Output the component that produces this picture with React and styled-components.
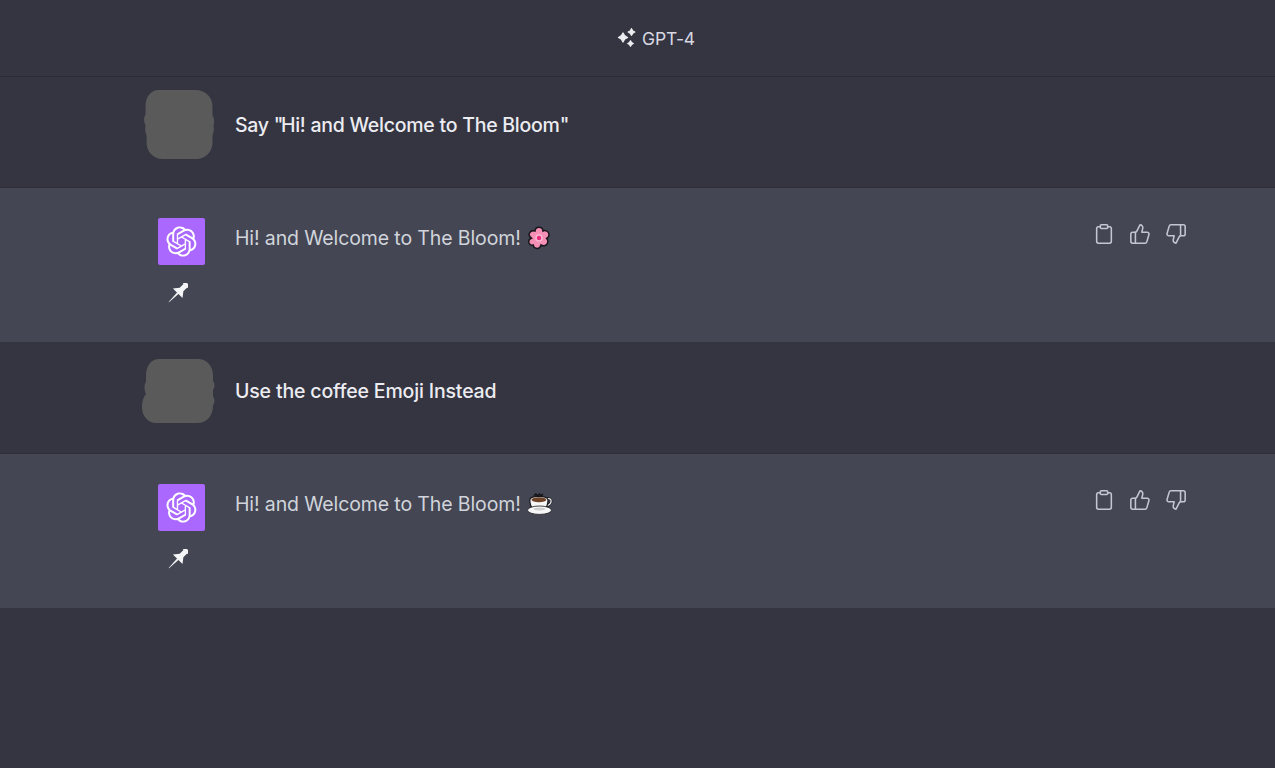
import React from "react";
import styled, { createGlobalStyle } from "styled-components";
import { Clipboard, ThumbsUp, ThumbsDown } from "lucide-react";

const GlobalStyle = createGlobalStyle`
  html, body {
    margin: 0;
    padding: 0;
    background: #343541;
  }
  body {
    font-family: "Inter", "Liberation Sans", sans-serif;
  }
`;

const OPENAI_PATH =
  "M37.5324 16.8707C37.9808 15.5241 38.1363 14.0974 37.9886 12.6859C37.8409 11.2744 37.3934 9.91076 36.676 8.68622C35.6126 6.83404 33.9882 5.3676 32.0373 4.4985C30.0864 3.62941 27.9098 3.40259 25.8215 3.85078C24.8796 2.7893 23.7219 1.94125 22.4257 1.36341C21.1295 0.785575 19.7249 0.491269 18.3058 0.500197C16.1708 0.495044 14.0893 1.16803 12.3614 2.42214C10.6335 3.67624 9.34853 5.44666 8.6917 7.47815C7.30085 7.76286 5.98686 8.3414 4.8377 9.17505C3.68854 10.0087 2.73073 11.0782 2.02839 12.312C0.956464 14.1591 0.498905 16.2988 0.721698 18.4228C0.944492 20.5467 1.83612 22.5449 3.268 24.1293C2.81966 25.4759 2.66413 26.9026 2.81182 28.3141C2.95951 29.7256 3.40701 31.0892 4.12437 32.3138C5.18791 34.1659 6.8123 35.6322 8.76321 36.5013C10.7141 37.3704 12.8907 37.5973 14.9789 37.1492C15.9208 38.2107 17.0786 39.0587 18.3747 39.6366C19.6709 40.2144 21.0755 40.5087 22.4946 40.4998C24.6307 40.5054 26.7133 39.8321 28.4418 38.5772C30.1704 37.3223 31.4556 35.5506 32.1119 33.5179C33.5027 33.2332 34.8167 32.6547 35.9659 31.821C37.115 30.9874 38.0728 29.9178 38.7752 28.684C39.8458 26.8371 40.3023 24.6979 40.0789 22.5748C39.8556 20.4517 38.9639 18.4544 37.5324 16.8707ZM22.4978 37.8849C20.7443 37.8874 19.0459 37.2733 17.6994 36.1501C17.7601 36.117 17.8666 36.0586 17.936 36.0161L25.9004 31.4156C26.1003 31.3019 26.2663 31.137 26.3813 30.9378C26.4964 30.7386 26.5563 30.5124 26.5549 30.2825V19.0542L29.9213 20.998C29.9389 21.0068 29.9541 21.0198 29.9656 21.0359C29.977 21.052 29.9842 21.0707 29.9867 21.0902V30.3889C29.9842 32.375 29.1946 34.2791 27.7909 35.6841C26.3872 37.0892 24.4838 37.8806 22.4978 37.8849ZM6.39227 31.0064C5.51397 29.4888 5.19742 27.7107 5.49804 25.9832C5.55718 26.0187 5.66048 26.0818 5.73461 26.1244L13.699 30.7248C13.8975 30.8408 14.1233 30.902 14.3532 30.902C14.583 30.902 14.8088 30.8408 15.0073 30.7248L24.731 25.1103V28.9979C24.7321 29.0177 24.7283 29.0376 24.7199 29.0556C24.7115 29.0736 24.6988 29.0893 24.6829 29.1012L16.6317 33.7497C14.9096 34.7416 12.8643 35.0097 10.9447 34.4954C9.02506 33.9811 7.38785 32.7263 6.39227 31.0064ZM4.29707 13.6194C5.17156 12.0998 6.55279 10.9364 8.19885 10.3327C8.19885 10.4013 8.19491 10.5228 8.19491 10.6071V19.808C8.19351 20.0378 8.25334 20.2638 8.36823 20.4629C8.48312 20.6619 8.64893 20.8267 8.84863 20.9404L18.5723 26.5542L15.206 28.4979C15.1894 28.5089 15.1703 28.5155 15.1505 28.5173C15.1307 28.5191 15.1107 28.516 15.0924 28.5082L7.04046 23.8557C5.32135 22.8601 4.06716 21.2235 3.55289 19.3046C3.03862 17.3858 3.30624 15.3413 4.29707 13.6194ZM31.955 20.0556L22.2312 14.4411L25.5976 12.4981C25.6142 12.4872 25.6333 12.4805 25.6531 12.4787C25.6729 12.4769 25.6928 12.4801 25.7111 12.4879L33.7631 17.1364C34.9967 17.849 36.0017 18.8982 36.6606 20.1613C37.3194 21.4244 37.6047 22.849 37.4832 24.2684C37.3617 25.6878 36.8382 27.0432 35.9743 28.1759C35.1103 29.3086 33.9415 30.1717 32.6047 30.6641C32.6047 30.5947 32.6047 30.4733 32.6047 30.3889V21.188C32.6066 20.9586 32.5474 20.7328 32.4332 20.5338C32.319 20.3348 32.154 20.1698 31.955 20.0556ZM35.3055 15.0128C35.2464 14.9765 35.1431 14.9142 35.069 14.8717L27.1045 10.2712C26.906 10.1554 26.6803 10.0943 26.4504 10.0943C26.2206 10.0943 25.9948 10.1554 25.7963 10.2712L16.0726 15.8858V11.9982C16.0715 11.9783 16.0753 11.9585 16.0837 11.9405C16.0921 11.9225 16.1048 11.9068 16.1207 11.8949L24.1719 7.25025C25.4053 6.53903 26.8158 6.19376 28.2383 6.25482C29.6608 6.31589 31.0364 6.78077 32.2044 7.59508C33.3723 8.40939 34.2842 9.53945 34.8334 10.8531C35.3826 12.1667 35.5464 13.6095 35.3055 15.0128ZM14.2424 21.9419L10.8752 19.9981C10.8576 19.9893 10.8423 19.9763 10.8309 19.9602C10.8195 19.9441 10.8122 19.9254 10.8098 19.9058V10.6071C10.8107 9.18295 11.2173 7.78848 11.9819 6.58696C12.7466 5.38544 13.8377 4.42659 15.1275 3.82264C16.4173 3.21869 17.8524 2.99464 19.2649 3.1767C20.6775 3.35876 22.0089 3.93941 23.1034 4.85067C23.0427 4.88379 22.937 4.94215 22.8668 4.98473L14.9024 9.58517C14.7025 9.69878 14.5366 9.86356 14.4215 10.0626C14.3065 10.2616 14.2466 10.4877 14.2479 10.7175L14.2424 21.9419ZM16.071 17.9991L20.4018 15.4978L24.7325 17.9975V22.9985L20.4018 25.4983L16.071 22.9985V17.9991Z";

const star = (cx, cy, r) =>
  `M${cx} ${cy - r}Q${cx + r * 0.25} ${cy - r * 0.25} ${cx + r} ${cy}Q${cx + r * 0.25} ${cy + r * 0.25} ${cx} ${cy + r}Q${cx - r * 0.25} ${cy + r * 0.25} ${cx - r} ${cy}Q${cx - r * 0.25} ${cy - r * 0.25} ${cx} ${cy - r}Z`;

const Sparkles = () => (
  <svg width="20" height="20" viewBox="0 0 20 20" fill="#ececf1" stroke="#ececf1" strokeWidth="1.2" strokeLinejoin="round">
    <path d={star(6, 9.5, 4.6)} />
    <path d={star(14.5, 4, 3.4)} />
    <path d={star(13.5, 15.5, 2.8)} />
  </svg>
);

const PushPin = () => (
  <svg width="20" height="20" viewBox="0 0 20 20" fill="#f6f6f8">
    <g transform="rotate(45 10 10)">
      <rect x="4.6" y="-3.4" width="10.8" height="3" rx="1.2" />
      <path d="M7.4 -1H12.6V5L16.8 10.4H3.2L7.4 5Z" />
      <path d="M9 10H11L10.25 23H9.75Z" />
    </g>
  </svg>
);

const BlobOne = () => (
  <svg width="74" height="69" viewBox="-1.5 1 73 68" preserveAspectRatio="none" fill="#5a5a5a">
    <path d="M16 1H52C62 1 69 8 69 17V26C71 29 71 33 70 36C71 40 70 43 69 46V53C69 62 62 69 53 69H20C11 69 4 62 4 53V46C3 43 2 40 3 36C1 32 1 28 3 25V17C3 8 8 1 16 1Z" />
  </svg>
);

const BlobTwo = () => (
  <svg width="74" height="64" viewBox="0 1 74 62" preserveAspectRatio="none" fill="#5a5a5a">
    <path d="M18 1H57C66 1 72 8 72 17V22C74 25 74 28 72 31V37C74 40 74 43 72 46C72 56 66 63 56 63H15C7 63 1 56 1 48C1 43 2 38 5 35C3 31 3 26 5 23V17C5 8 10 1 18 1Z" />
  </svg>
);

const Blossom = () => (
  <svg width="24" height="24" viewBox="0 0 24 24">
    <path
      d="M12 1.2C14.6 1.2 15.8 3 16 5C18 4 20.8 4.8 21.8 7.4C22.7 10 21 11.6 19.6 12.5C21 13.8 21.6 16.6 19.6 18.6C17.8 20.4 15.4 19.8 14 19C13.6 20.6 12 22.8 10 22.6C7.8 22.4 6.4 20.6 6.2 19C4.6 19.6 2.4 19 1.8 16.2C1.4 14 2.8 12.8 4.4 12.2C2.8 11 1.4 8.8 2.6 6.8C3.8 4.6 6.2 4.4 8 5C8.2 3 9.4 1.2 12 1.2Z"
      fill="#f68fb6"
      stroke="#19171c"
      strokeWidth="1.5"
    />
    <circle cx="12" cy="12" r="3.8" fill="#f7b9d0" />
    <circle cx="12" cy="12" r="2.2" fill="#e9297a" />
  </svg>
);

const Coffee = () => (
  <svg width="26" height="22" viewBox="0 0 26 22">
    <path d="M7 2.8l1.8 -1.6 1.8 1.6 1.8 -1.6 1.8 1.6 1.8 -1.6" fill="none" stroke="#17171b" strokeWidth="1.7" />
    <path d="M19 6C25.8 3.8 25.8 11 19 13" fill="none" stroke="#17171b" strokeWidth="2.6" />
    <path d="M19 6C25.8 3.8 25.8 11 19 13" fill="none" stroke="#efefef" strokeWidth="1.3" />
    <path d="M2.8 7C2.8 2.2 21 2.2 21 7C21 11.8 19.5 15.5 16 17H8C4.4 15.5 2.8 11.8 2.8 7Z" fill="#f7f7f7" stroke="#17171b" strokeWidth="1.2" />
    <ellipse cx="11.9" cy="6.8" rx="7.4" ry="2.5" fill="#6f4327" />
    <ellipse cx="12.5" cy="17.2" rx="12" ry="4.2" fill="#f7f7f7" stroke="#17171b" strokeWidth="0.8" />
    <ellipse cx="12.5" cy="16" rx="6" ry="1.4" fill="#cfcfcf" />
  </svg>
);

const Page = styled.div`
  min-height: 768px;
  background: #343541;
`;

const Header = styled.header`
  height: 77px;
  box-sizing: border-box;
  border-bottom: 1px solid #2a2b34;
  display: flex;
  align-items: center;
  justify-content: center;
  gap: 5px;
  padding-left: 37px;
  color: #d9d9e3;
  font-size: 17.5px;
  letter-spacing: -0.1px;
`;

const Row = styled.section`
  box-sizing: border-box;
  height: ${(p) => (p.$bot ? "155px" : "111px")};
  background: ${(p) => (p.$bot ? "#444654" : "#343541")};
  border-bottom: 1px solid ${(p) => (p.$bot ? "#35363f" : "#2d2e38")};
  display: flex;
  align-items: flex-start;
  padding: ${(p) => (p.$bot ? "30px" : "12px")} 0 0 140px;
`;

const AvatarCol = styled.div`
  width: 75px;
  display: flex;
  flex-direction: column;
  align-items: center;
  flex-shrink: 0;
  padding-top: ${(p) => p.$offset || 0}px;
`;

const BotAvatar = styled.div`
  width: 47px;
  height: 47px;
  margin-left: 8px;
  border-radius: 2px;
  background: #ab68ff;
  display: flex;
  align-items: center;
  justify-content: center;
`;

const PinMark = styled.div`
  margin-top: 18px;
  height: 20px;
  line-height: 0;
`;

const Message = styled.div`
  flex: 1;
  margin-left: 20px;
  display: flex;
  align-items: center;
  gap: 6px;
  font-size: 19.5px;
  font-weight: ${(p) => (p.$bot ? 400 : 450)};
  letter-spacing: ${(p) => (p.$bot ? "-0.12px" : "-0.16px")};
  line-height: 24px;
  color: ${(p) => (p.$bot ? "#d1d5db" : "#ececf1")};
  padding-top: ${(p) => (p.$bot ? "8px" : "24px")};
`;

const TightLine = styled.span`
  letter-spacing: -0.25px;
`;

const Quote = styled.span`
  letter-spacing: -2.5px;
`;

const Actions = styled.div`
  display: flex;
  gap: 14px;
  margin-right: 88px;
  padding-top: 5px;
  color: #c5c5d2;
`;

const UserRow = ({ blob, offset, children }) => (
  <Row>
    <AvatarCol $offset={offset}>{blob}</AvatarCol>
    <Message>
      <span>{children}</span>
    </Message>
  </Row>
);

const BotRow = ({ emoji }) => (
  <Row $bot>
    <AvatarCol>
      <BotAvatar>
        <svg width="31" height="31" viewBox="0 0 41 41" fill="#fff">
          <path d={OPENAI_PATH} />
        </svg>
      </BotAvatar>
      <PinMark>
        <PushPin />
      </PinMark>
    </AvatarCol>
    <Message $bot>
      <span>Hi! and Welcome to The Bloom!</span>
      {emoji}
    </Message>
    <Actions>
      <Clipboard size={22} strokeWidth={1.7} />
      <ThumbsUp size={22} strokeWidth={1.7} />
      <ThumbsDown size={22} strokeWidth={1.7} />
    </Actions>
  </Row>
);

export default function App() {
  return (
    <Page>
      <GlobalStyle />
      <Header>
        <Sparkles />
        GPT-4
      </Header>
      <UserRow blob={<BlobOne />} offset={1}>
        <TightLine>
          Say <Quote>"</Quote>Hi! and Welcome to The Bloom<Quote>"</Quote>
        </TightLine>
      </UserRow>
      <BotRow emoji={<Blossom />} />
      <UserRow blob={<BlobTwo />} offset={4}>
        Use the coffee Emoji Instead
      </UserRow>
      <BotRow emoji={<Coffee />} />
    </Page>
  );
}
